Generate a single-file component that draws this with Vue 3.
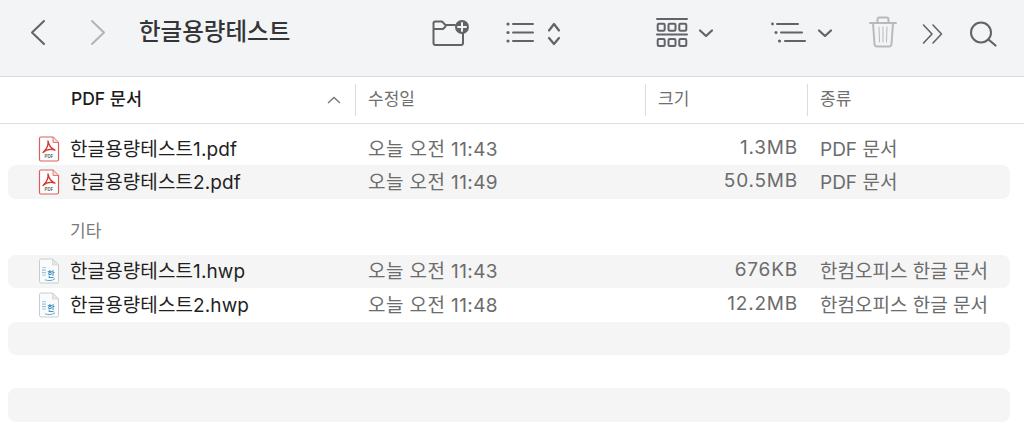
<script setup>
const groups = [
  {
    label: null,
    rows: [
      { name: '한글용량테스트1.pdf', date: '오늘 오전 11:43', size: '1.3MB', kind: 'PDF 문서', type: 'pdf' },
      { name: '한글용량테스트2.pdf', date: '오늘 오전 11:49', size: '50.5MB', kind: 'PDF 문서', type: 'pdf', odd: true },
    ],
  },
  {
    label: '기타',
    rows: [
      { name: '한글용량테스트1.hwp', date: '오늘 오전 11:43', size: '676KB', kind: '한컴오피스 한글 문서', type: 'hwp', odd: true },
      { name: '한글용량테스트2.hwp', date: '오늘 오전 11:48', size: '12.2MB', kind: '한컴오피스 한글 문서', type: 'hwp' },
      { odd: true },
      {},
      { odd: true },
    ],
  },
]
</script>

<template>
  <div class="finder">
    <header class="toolbar">
      <div class="nav">
        <svg class="ic w-back" viewBox="28 0 20 77"><path d="M44 21 L32 32.5 L44 44" /></svg>
        <svg class="ic w-back fwd" viewBox="88 0 20 77"><path d="M92 21 L104 32.5 L92 44" /></svg>
      </div>
      <div class="title">한글용량테스트</div>
      <div class="tools">
        <svg class="ic w-folder" viewBox="432 0 40 77">
          <path d="M463 31 V43 Q463 45 461 45 H435.500 Q433.500 45 433.500 43 V23 Q433.500 21.500 435.500 21.500 H442 L445.500 25 H455" />
          <path d="M434 29 H443 L445.500 26.500" />
          <circle class="fill" cx="462" cy="27" r="7" />
          <path class="plus" d="M462 23 V31 M458 27 H466" />
        </svg>
        <svg class="ic w-list" viewBox="506 0 30 77">
          <circle class="fill none" cx="508" cy="24" r="1.600" />
          <circle class="fill none" cx="508" cy="32.500" r="1.600" />
          <circle class="fill none" cx="508" cy="41" r="1.600" />
          <path d="M513 24 H533 M513 32.500 H533 M513 41 H533" />
        </svg>
        <svg class="ic w-updown" viewBox="547 0 14 77"><path class="bold" d="M549 30.500 L554 24 L559 30.500 M549 38 L554 44 L559 38" /></svg>
        <svg class="ic w-grid" viewBox="656 0 32 77">
          <path d="M657 19 H687 M657 34.500 H687" />
          <rect x="657.700" y="23.700" width="7" height="7" rx="1.200" />
          <rect x="668.500" y="23.700" width="7" height="7" rx="1.200" />
          <rect x="679.300" y="23.700" width="7" height="7" rx="1.200" />
          <rect x="657.700" y="39" width="7" height="7" rx="1.200" />
          <rect x="668.500" y="39" width="7" height="7" rx="1.200" />
          <rect x="679.300" y="39" width="7" height="7" rx="1.200" />
        </svg>
        <svg class="ic w-chev" viewBox="698 0 16 77"><path class="bold" d="M700 30.500 L706 36 L712 30.500" /></svg>
        <svg class="ic w-sort" viewBox="770 0 36 77">
          <circle class="fill none" cx="772.500" cy="24" r="1.400" />
          <circle class="fill none" cx="776" cy="32.500" r="1.500" />
          <circle class="fill none" cx="779.500" cy="41" r="1.600" />
          <path d="M777 24 H798 M781 32.500 H802 M785 41 H805" />
        </svg>
        <svg class="ic w-chev" viewBox="817 0 16 77"><path class="bold" d="M819 30.500 L825 36 L831 30.500" /></svg>
        <svg class="ic w-trash off" viewBox="869 0 28 77">
          <path d="M870 23 H896 M877.500 23 V19.500 Q877.500 17.500 879.500 17.500 H886.500 Q888.500 17.500 888.500 19.500 V23" />
          <path d="M873 23 L874.500 44 Q874.700 46.500 877 46.500 H889 Q891.300 46.500 891.500 44 L893 23" />
          <path class="thin" d="M879 27 L879.500 42 M883 27 V42 M887 27 L886.500 42" />
        </svg>
        <svg class="ic w-more" viewBox="922 0 22 77"><path class="mid" d="M923.500 25 L932 34 L923.500 43 M933 25 L941.500 34 L933 43" /></svg>
        <svg class="ic w-search" viewBox="969 0 28 77">
          <circle cx="981" cy="32.500" r="10" />
          <path class="bold" d="M988.500 39.500 L995.500 45.500" />
        </svg>
      </div>
    </header>

    <div class="colhead">
      <div class="col first">
        <span class="first-label">PDF 문서</span>
        <svg class="sort-arrow" viewBox="0 0 14 8"><path d="M1 7 L7 1.500 L13 7" /></svg>
      </div>
      <div class="col">수정일</div>
      <div class="col">크기</div>
      <div class="col">종류</div>
    </div>

    <div class="list">
      <section v-for="(g, gi) in groups" :key="gi" class="group">
        <div v-if="g.label" class="group-label">{{ g.label }}</div>
        <div v-for="(r, i) in g.rows" :key="i" class="row" :class="{ odd: r.odd }">
          <div class="name" v-if="r.name">
            <svg v-if="r.type === 'pdf'" class="file" viewBox="0 0 22 26">
              <path d="M1.500 2.500 Q1.500 1 3 1 H15 L20.500 6.500 V23.500 Q20.500 25 19 25 H3 Q1.500 25 1.500 23.500 Z" fill="#fff" stroke="#d9605a" stroke-width="1.200" />
              <path d="M15 1 V6.500 H20.500" fill="#f7dcda" stroke="#d9605a" stroke-width="0.800" />
              <path d="M10 5 C10.500 9 9 13 5 16.500 C8 13.500 13 13 17 14 C14 13 11 10 10 5 Z" fill="none" stroke="#d8352f" stroke-width="1.300" stroke-linejoin="round" />
              <text x="11" y="22.300" text-anchor="middle" class="pdf-t">PDF</text>
            </svg>
            <svg v-else class="file" viewBox="0 0 22 26">
              <path d="M1.500 2.500 Q1.500 1 3 1 H14.500 L20.500 7 V23.500 Q20.500 25 19 25 H3 Q1.500 25 1.500 23.500 Z" fill="#fbfbfc" stroke="#c8ccd0" stroke-width="1" />
              <path d="M14.500 1 V7 H20.500 Z" fill="#e3e8ec" stroke="#c8ccd0" stroke-width="0.600" />
              <rect x="4" y="9" width="4" height="1.200" fill="#a9d3ec" />
              <rect x="4" y="11.500" width="4" height="1.200" fill="#8cc6e8" />
              <rect x="4" y="14" width="4" height="1.200" fill="#8cc6e8" />
              <rect x="4" y="16.500" width="4" height="1.200" fill="#a9d3ec" />
              <text x="13" y="19" text-anchor="middle" class="hwp-t">한</text>
              <path d="M7 21.800 C10 23 14 23 17 20.800" fill="none" stroke="#4fb1dd" stroke-width="1" />
            </svg>
            <span class="fname">{{ r.name }}</span>
          </div>
          <div class="cell date" v-if="r.name">{{ r.date }}</div>
          <div class="cell size" v-if="r.name">{{ r.size }}</div>
          <div class="cell kind" v-if="r.name">{{ r.kind }}</div>
        </div>
      </section>
    </div>
  </div>
</template>

<style scoped>
.finder {
  width: 1024px;
  height: 432px;
  overflow: hidden;
  background: #fff;
  font-family: Inter, "Noto Sans CJK KR", sans-serif;
  color: #1f1f1f;
}

.toolbar {
  height: 77px;
  box-sizing: border-box;
  background: #f3f4f6;
  border-bottom: 1px solid #dcdcde;
  display: grid;
  grid-template-columns: 139px 294px 1fr;
}
.nav {
  display: flex;
  padding-left: 28px;
  gap: 40px;
}
.title {
  font-size: 23.500px;
  font-weight: 500;
  line-height: 63px;
  color: #333537;
  white-space: nowrap;
}
.tools {
  display: flex;
  margin-left: -1px;
}

.ic {
  height: 77px;
  flex: none;
  fill: none;
  stroke: #616367;
  stroke-width: 2;
  stroke-linecap: round;
  stroke-linejoin: round;
}
.ic .fill {
  fill: #616367;
  stroke: none;
}
.ic .plus {
  stroke: #f3f4f6;
  stroke-width: 2;
}
.ic .bold {
  stroke-width: 2.200;
}
.ic .mid {
  stroke-width: 1.600;
}
.ic .thin {
  stroke-width: 1;
}
.fwd {
  stroke: #b2b3b5;
}
.off {
  stroke: #b9babc;
}
.w-back { width: 20px; }
.w-folder { width: 40px; }
.w-list { width: 30px; margin-left: 34px; }
.w-updown { width: 14px; margin-left: 11px; }
.w-grid { width: 32px; margin-left: 95px; }
.w-chev { width: 16px; margin-left: 10px; }
.w-sort { width: 36px; margin-left: 56px; }
.w-sort + .w-chev { margin-left: 11px; }
.w-trash { width: 28px; margin-left: 36px; }
.w-more { width: 22px; margin-left: 25px; }
.w-search { width: 28px; margin-left: 25px; }

.colhead {
  height: 47px;
  box-sizing: border-box;
  border-bottom: 1px solid #dfdfdf;
  display: grid;
  grid-template-columns: 355px 290px 162px 1fr;
  align-items: center;
  font-size: 17px;
  color: #6f6f6f;
}
.col {
  height: 32px;
  border-left: 1px solid #dcdcdc;
  padding-left: 12px;
  line-height: 31px;
}
.col.first {
  border-left: 0;
  padding-left: 71px;
  padding-right: 14px;
  display: flex;
  justify-content: space-between;
  align-items: center;
  color: #1c1c1c;
  font-weight: 500;
  font-size: 17.500px;
}
.first-label {
  padding-bottom: 3px;
}
.sort-arrow {
  width: 14px;
  height: 8px;
  fill: none;
  stroke: #777;
  stroke-width: 1.300;
}

.list {
  padding: 8px 14px 0 8px;
}
.group-label {
  height: 56px;
  box-sizing: border-box;
  padding: 20px 0 0 62px;
  line-height: 24px;
  font-size: 17px;
  color: #7a7a7a;
}
.row {
  height: 33.400px;
  display: grid;
  grid-template-columns: 347px 290px 153px 1fr;
  align-items: center;
  border-radius: 8px;
  font-size: 19px;
}
.row.odd {
  background: #f5f5f5;
}
.name {
  display: flex;
  align-items: center;
  gap: 10px;
  padding-left: 30px;
  white-space: nowrap;
}
.fname {
  letter-spacing: 0.100px;
  padding-bottom: 3px;
}
.file {
  width: 22px;
  height: 26px;
  flex: none;
}
.pdf-t {
  font-size: 4.500px;
  font-weight: 700;
  fill: #666;
}
.hwp-t {
  font-size: 8px;
  font-weight: 500;
  fill: #2586b8;
}
.cell {
  color: #6c6c6c;
  padding-left: 13px;
  padding-bottom: 3px;
  white-space: nowrap;
}
.date {
  letter-spacing: 0.400px;
}
.size {
  text-align: right;
  padding-left: 0;
  letter-spacing: 0.800px;
}
.kind {
  padding-left: 22px;
}
</style>
